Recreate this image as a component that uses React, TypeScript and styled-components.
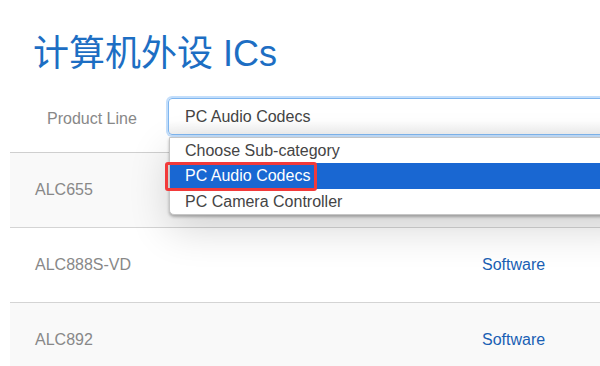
import styled, { createGlobalStyle } from 'styled-components'

const GlobalStyle = createGlobalStyle`
  html, body {
    margin: 0;
    padding: 0;
    background: #fff;
    overflow: hidden;
  }
  body {
    font-family: 'Liberation Sans', Arial, sans-serif;
  }
`

interface Product {
  name: string
}

const products: Product[] = [
  { name: 'ALC655' },
  { name: 'ALC888S-VD' },
  { name: 'ALC892' },
]

const options = ['Choose Sub-category', 'PC Audio Codecs', 'PC Camera Controller']
const selected = 'PC Audio Codecs'

export default function App() {
  return (
    <Page>
      <GlobalStyle />
      <Title>计算机外设 ICs</Title>
      <FilterRow>
        <Label>Product Line</Label>
        <SelectWrap>
          <SelectBox>{selected}</SelectBox>
          <Menu>
            {options.map((opt) => (
              <Option key={opt} active={opt === selected}>
                {opt}
                {opt === selected && <Marker />}
              </Option>
            ))}
          </Menu>
        </SelectWrap>
      </FilterRow>
      <Table>
        {products.map(({ name }, i) => (
          <Row key={name} striped={i % 2 === 0}>
            <Name>{name}</Name>
            <Link>Software</Link>
          </Row>
        ))}
      </Table>
    </Page>
  )
}

const Page = styled.div`
  padding-left: 10px;
  width: 100%;
  height: 366px;
  box-sizing: border-box;
  overflow: hidden;
`

const Title = styled.h1`
  margin: 0;
  padding: 32px 0 0 23px;
  height: 44px;
  font-family: 'Liberation Sans', 'Noto Sans CJK SC', sans-serif;
  font-size: 36px;
  font-weight: 400;
  line-height: 44px;
  color: #1d6ec3;
`

const FilterRow = styled.div`
  display: flex;
  align-items: flex-start;
  margin-top: 22px;
  height: 54px;
  position: relative;
  z-index: 2;
`

const Label = styled.div`
  width: 121px;
  padding-left: 37px;
  padding-top: 10px;
  font-size: 16px;
  line-height: 22px;
  color: #888;
`

const SelectWrap = styled.div`
  flex: 1;
  position: relative;
  margin-right: -40px;
`

const SelectBox = styled.div`
  height: 35px;
  box-sizing: content-box;
  border: 1px solid #7fb6ef;
  border-radius: 4px;
  box-shadow: 0 0 0 2px #c3defb;
  background: linear-gradient(#fff 62%, #f0f0f0);
  padding-left: 16px;
  font-size: 16px;
  line-height: 35px;
  color: #444;
`

const Menu = styled.div`
  position: absolute;
  top: 39px;
  left: 1px;
  right: 0;
  background: #fff;
  border: 1px solid #c6c6c6;
  border-radius: 0 0 5px 5px;
  box-shadow: 0 2px 3px rgba(0, 0, 0, 0.28), 0 14px 40px rgba(0, 0, 0, 0.16);
`

const Option = styled.div<{ active?: boolean }>`
  position: relative;
  height: ${({ active }) => (active ? '26px' : '25px')};
  padding-left: 15px;
  font-size: 16px;
  line-height: ${({ active }) => (active ? '26px' : '25px')};
  color: ${({ active }) => (active ? '#fff' : '#444')};
  background: ${({ active }) => (active ? '#1967d2' : 'transparent')};
`

const Marker = styled.span`
  position: absolute;
  left: -5px;
  top: -1px;
  width: 152px;
  height: 29px;
  box-sizing: border-box;
  border: 3px solid #f23a3a;
  border-radius: 3px;
`

const Table = styled.div`
  border-top: 1px solid #cfcfcf;
`

const Row = styled.div<{ striped?: boolean }>`
  display: grid;
  grid-template-columns: 447px auto;
  align-items: center;
  height: 74px;
  padding-left: 25px;
  border-bottom: 1px solid #d4d4d4;
  background: ${({ striped }) => (striped ? '#f9f9f9' : '#fff')};
  font-size: 16px;
`

const Name = styled.span`
  color: #888;
`

const Link = styled.span`
  color: #1a5fb4;
`
